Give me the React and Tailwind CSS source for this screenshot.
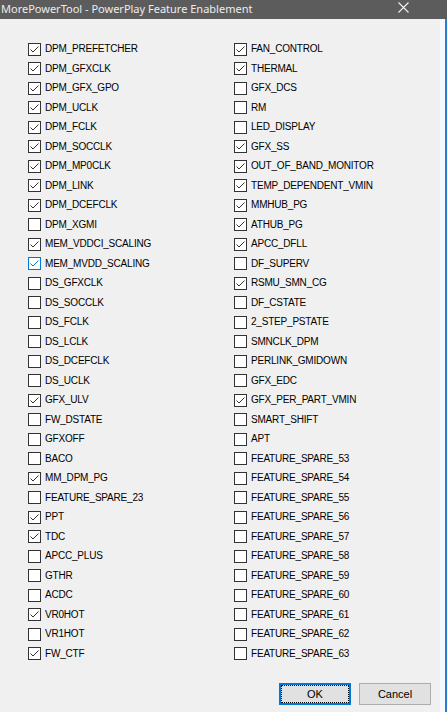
import React from "react";

const left = [
  ["DPM_PREFETCHER", 1], ["DPM_GFXCLK", 1], ["DPM_GFX_GPO", 1], ["DPM_UCLK", 1],
  ["DPM_FCLK", 1], ["DPM_SOCCLK", 1], ["DPM_MP0CLK", 1], ["DPM_LINK", 1],
  ["DPM_DCEFCLK", 1], ["DPM_XGMI", 0], ["MEM_VDDCI_SCALING", 1], ["MEM_MVDD_SCALING", 2],
  ["DS_GFXCLK", 0], ["DS_SOCCLK", 0], ["DS_FCLK", 0], ["DS_LCLK", 0],
  ["DS_DCEFCLK", 0], ["DS_UCLK", 0], ["GFX_ULV", 1], ["FW_DSTATE", 0],
  ["GFXOFF", 0], ["BACO", 0], ["MM_DPM_PG", 1], ["FEATURE_SPARE_23", 0],
  ["PPT", 1], ["TDC", 1], ["APCC_PLUS", 0], ["GTHR", 0],
  ["ACDC", 0], ["VR0HOT", 1], ["VR1HOT", 0], ["FW_CTF", 1],
];

const right = [
  ["FAN_CONTROL", 1], ["THERMAL", 1], ["GFX_DCS", 0], ["RM", 0],
  ["LED_DISPLAY", 0], ["GFX_SS", 1], ["OUT_OF_BAND_MONITOR", 1], ["TEMP_DEPENDENT_VMIN", 1],
  ["MMHUB_PG", 1], ["ATHUB_PG", 1], ["APCC_DFLL", 1], ["DF_SUPERV", 0],
  ["RSMU_SMN_CG", 1], ["DF_CSTATE", 0], ["2_STEP_PSTATE", 0], ["SMNCLK_DPM", 0],
  ["PERLINK_GMIDOWN", 0], ["GFX_EDC", 0], ["GFX_PER_PART_VMIN", 1], ["SMART_SHIFT", 0],
  ["APT", 0], ["FEATURE_SPARE_53", 0], ["FEATURE_SPARE_54", 0], ["FEATURE_SPARE_55", 0],
  ["FEATURE_SPARE_56", 0], ["FEATURE_SPARE_57", 0], ["FEATURE_SPARE_58", 0], ["FEATURE_SPARE_59", 0],
  ["FEATURE_SPARE_60", 0], ["FEATURE_SPARE_61", 0], ["FEATURE_SPARE_62", 0], ["FEATURE_SPARE_63", 0],
];

// state: 0 = off, 1 = on, 2 = on + hovered (blue)
const Check = ({ label, state }) => {
  const hot = state === 2;
  return (
    <div className="flex items-center h-[19.5px]">
      <div
        className={
          "w-[13px] h-[13px] bg-white border flex items-center justify-center " +
          (hot ? "border-[#0078d7]" : "border-[#333333]")
        }
      >
        {state > 0 && (
          <svg width="11" height="11" viewBox="0 0 11 11">
            <path
              d="M1.5 5.5 L4 8 L9.5 2.5"
              fill="none"
              stroke={hot ? "#0078d7" : "#333333"}
              strokeWidth="1"
            />
          </svg>
        )}
      </div>
      <span className="ml-[4px] text-[10px] tracking-[-0.2px] text-black leading-none">{label}</span>
    </div>
  );
};

const App = () => {
  return (
    <div className="w-[447px] h-[712px] bg-[#f0f0f0] flex flex-col overflow-hidden font-['Liberation_Sans',Arial,sans-serif]">
      <div className="h-[19px] bg-[#5c5c5c] flex items-center justify-between shrink-0">
        <span className="text-[11px] text-[#ececec] pl-[1px] font-['Noto_Sans',sans-serif] leading-none -mt-[3px]">
          MorePowerTool - PowerPlay Feature Enablement
        </span>
        <svg width="11" height="11" viewBox="0 0 11 11" className="mr-[38px] -mt-[4px]">
          <path d="M0.5 0.5 L10.5 10.5 M10.5 0.5 L0.5 10.5" stroke="#f2f2f2" strokeWidth="1.1" />
        </svg>
      </div>
      <div className="flex-1 flex">
        <div className="flex-1 flex flex-col">
          <div className="flex pl-[28px] pt-[20.5px]">
            <div className="w-[206px] flex flex-col">
              {left.map(([l, s]) => (
                <Check key={l} label={l} state={s} />
              ))}
            </div>
            <div className="flex flex-col">
              {right.map(([l, s]) => (
                <Check key={l} label={l} state={s} />
              ))}
            </div>
          </div>
          <div className="flex justify-end gap-[8px] pr-[9px] mt-[19.5px]">
            <button className="w-[72px] h-[22px] bg-[#e1e1e1] border-2 border-[#0078d7] flex items-center justify-center text-[11px] text-black">
              <span className="w-full h-full border border-dotted border-black flex items-center justify-center">OK</span>
            </button>
            <button className="w-[72px] h-[22px] bg-[#e1e1e1] border border-[#adadad] flex items-center justify-center text-[11px] text-black">
              Cancel
            </button>
          </div>
        </div>
        <div className="w-[5px] bg-[#f7fafd]" />
        <div className="w-[2px] bg-[#2b7bd0]" />
      </div>
    </div>
  );
};

export default App;
